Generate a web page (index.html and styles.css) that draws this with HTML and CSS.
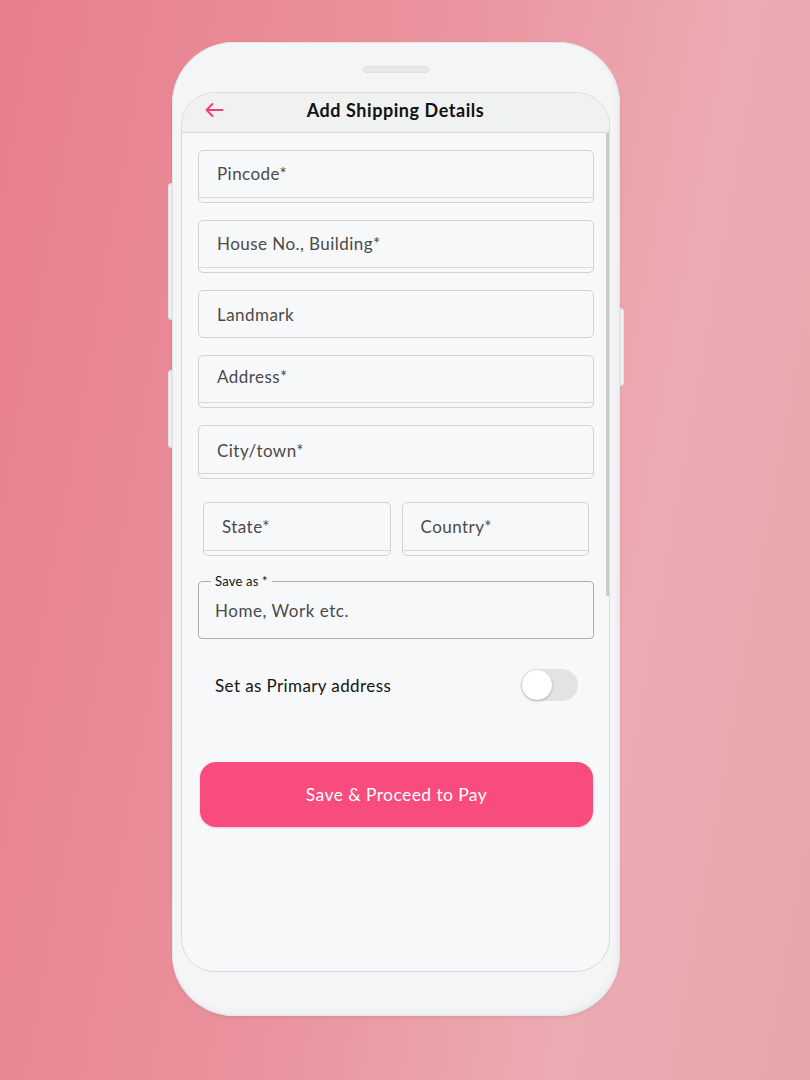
FILE: index.html
```html
<!DOCTYPE html>
<html>
<head>
<meta charset="utf-8">
<link rel="stylesheet" href="styles.css">
</head>
<body>
<div class="stage">
  <div class="phone">
    <span class="btn btn-l1"></span>
    <span class="btn btn-l2"></span>
    <span class="btn btn-r1"></span>
    <div class="speaker"></div>
    <div class="screen">
      <div class="header">
        <svg class="back" width="20" height="16" viewBox="0 0 20 16"><path d="M18.5 8H2.5M8.5 2L2.5 8L8.5 14" fill="none" stroke="#f0406f" stroke-width="2" stroke-linecap="round" stroke-linejoin="round"/></svg>
        <div class="title">Add Shipping Details</div>
      </div>
      <div class="body">
        <div class="scrollbar"></div>
        <div class="form">
          <div class="field lined">Pincode*</div>
          <div class="field lined">House No., Building*</div>
          <div class="field short">Landmark</div>
          <div class="field lined">Address*</div>
          <div class="field lined">City/town*</div>
          <div class="row">
            <div class="field lined half">State*</div>
            <div class="field lined half">Country*</div>
          </div>
          <fieldset class="outlined">
            <legend>Save as *</legend>
            <div class="ph">Home, Work etc.</div>
          </fieldset>
          <div class="toggle-row">
            <span>Set as Primary address</span>
            <span class="toggle"><span class="knob"></span></span>
          </div>
          <button class="cta">Save &amp; Proceed to Pay</button>
        </div>
      </div>
    </div>
  </div>
</div>
</body>
</html>
```

FILE: styles.css
```css
html, body { margin: 0; padding: 0; }
body {
  width: 810px; height: 1080px; overflow: hidden;
  background: linear-gradient(100deg, #e67f8b 0%, #ea939e 45%, #ecabb2 75%, #e6a5aa 100%);
  font-family: "Lato", "DejaVu Sans", sans-serif;
}
.stage { padding: 42px 0 0 172px; }
.phone {
  position: relative;
  width: 448px; height: 974px;
  border-radius: 62px;
  background: #f4f5f6;
  box-shadow: inset 0 0 0 1px #e2e6e7, inset -3px -4px 6px rgba(0,0,0,0.04), 0 2px 3px rgba(0,0,0,0.06);
  padding: 50px 10px 0 9px;
  box-sizing: border-box;
}
.btn { position: absolute; width: 4px; background: #eef0f1; border: 1px solid #dfe3e4; box-sizing: border-box; }
.btn-l1 { left: -4px; top: 141px; height: 137px; border-radius: 3px 0 0 3px; }
.btn-l2 { left: -4px; top: 328px; height: 78px; border-radius: 3px 0 0 3px; }
.btn-r1 { right: -4px; top: 266px; height: 78px; border-radius: 0 3px 3px 0; }
.speaker {
  position: absolute; left: 191px; top: 24px;
  width: 66px; height: 7px; border-radius: 4px;
  background: #e6e9ea; border: 1px solid #dde1e2; box-sizing: border-box;
}
.screen {
  width: 429px; height: 880px;
  border: 1px solid #d6dcdd;
  border-radius: 34px;
  box-sizing: border-box;
  background: #f7f8f9;
  overflow: hidden;
  display: flex; flex-direction: column;
}
.header {
  height: 40px; flex: none;
  background: #f0f1f1;
  border-bottom: 1px solid #d8dbdc;
  display: flex; align-items: center; justify-content: center;
  position: relative;
  box-sizing: border-box;
  padding-bottom: 6px;
}
.back { position: absolute; left: 22px; top: 9px; }
.title { font-weight: 700; font-size: 18px; color: #111; letter-spacing: 0.55px; margin-left: 0; }
.body { position: relative; flex: 1; }
.scrollbar { position: absolute; right: 0; top: 0; width: 3px; height: 463px; background: #c9cdce; }
.form { padding: 17px 15px 0 16px; display: flex; flex-direction: column; }
.field {
  height: 53px; box-sizing: border-box;
  border: 1px solid #cfd3d4;
  border-radius: 5px;
  padding: 12px 0 0 18px;
  font-size: 17px; color: #4a4a4a;
  letter-spacing: 0.45px;
  margin-bottom: 17px;
  position: relative;
  background: #f7f8f9;
}
.field.lined::after {
  content: ""; position: absolute; left: 0; right: 0; bottom: 4px;
  height: 1px; background: #d5d9da;
}
.field.short { height: 48px; padding-top: 13px; }
.field:nth-child(4) { padding-top: 10px; }
.field:nth-child(5) { padding-top: 14px; height: 54px; }
.row { display: flex; gap: 11px; padding: 6px 5px 0 5px; }
.field.half { flex: 1; height: 54px; padding-top: 13px; padding-left: 18px; margin-bottom: 24px; }
.outlined {
  margin: 0; height: 66px; box-sizing: border-box;
  border: 1px solid #a9adae; border-radius: 4px;
  padding: 0 0 0 16px;
  margin-top: -7px;
}
.outlined legend { font-size: 13px; color: #111; padding: 0 4px 0 4px; margin-left: -4px; letter-spacing: 0.2px; }
.ph { font-size: 17px; color: #4a4a4a; padding-top: 11px; letter-spacing: 0.55px; }
.toggle-row {
  display: flex; align-items: center; justify-content: space-between;
  padding: 0 16px 0 17px; margin-top: 30px;
  font-size: 17px; color: #151515; letter-spacing: 0.4px;
}
.toggle {
  width: 57px; height: 32px; border-radius: 16px; background: #e2e3e5;
  position: relative; display: block;
}
.knob {
  position: absolute; left: 1px; top: 1px; width: 30px; height: 30px; border-radius: 50%;
  background: #fff; box-shadow: 0 1px 3px rgba(0,0,0,0.25);
}
.cta {
  margin: 61px 1px 0 2px;
  height: 65px; border: none; border-radius: 16px;
  background: #f74c7d;
  color: #fff; font-family: inherit; font-size: 17.5px; letter-spacing: 0.4px;
  box-shadow: 0 1px 2px rgba(200,40,80,0.25);
}
```
